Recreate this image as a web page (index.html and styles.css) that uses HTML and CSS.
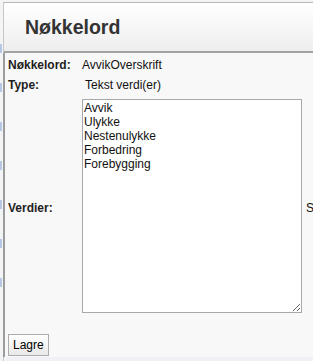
FILE: index.html
```html
<!DOCTYPE HTML>
<html lang="no">
<head>
    <meta charset="UTF-8">
    <meta name="viewport" content="width=device-width, initial-scale=1.0">
    <title>Nøkkelord</title>
    <link rel="stylesheet" href="styles.css">
</head>
<body>
    <div class="page-behind">
        <i></i><i></i><i></i><i></i><i></i><i></i><i></i>
    </div>

    <div class="dialog">
        <div class="dialog-header">
            <h1>Nøkkelord</h1>
        </div>

        <div class="dialog-content">
            <table class="form-table">
                <tr>
                    <th>Nøkkelord:</th>
                    <td>AvvikOverskrift</td>
                </tr>
                <tr>
                    <th>Type:</th>
                    <td><span class="type-value">Tekst verdi(er)</span></td>
                </tr>
                <tr>
                    <th>Verdier:</th>
                    <td><textarea class="values" spellcheck="false">Avvik
Ulykke
Nestenulykke
Forbedring
Forebygging</textarea></td>
                    <td class="hint">Sortert</td>
                </tr>
            </table>

            <button class="save-button">Lagre</button>
        </div>

        <div class="dialog-footer"></div>
    </div>
</body>
</html>
```

FILE: styles.css
```css
/* Page and the content behind the dialog */
html, body {
    margin: 0;
    padding: 0;
    height: 100%;
    overflow: hidden;
}

body {
    font-family: "Liberation Sans", Arial, sans-serif;
    font-size: 12px;
    background-color: #f3f4f6;
    color: #111;
    display: flex;
}

.page-behind {
    width: 3px;
    flex-shrink: 0;
    display: flex;
    flex-direction: column;
    padding-top: 44px;
    gap: 30px;
}

/* faint link fragments of the page behind */
.page-behind i {
    display: block;
    width: 2px;
    height: 9px;
    background-color: #b7c8e4;
}

/* Dialog box */
.dialog {
    width: 380px;
    flex-shrink: 0;
    margin-top: 2px;
    display: flex;
    flex-direction: column;
    border-top: 1px solid #b8b8b8;
    border-left: 1px solid #c8c8c8;
}

.dialog-header {
    height: 48px;
    display: flex;
    align-items: center;
    padding-left: 21px;
    background: linear-gradient(#ffffff, #eeeeee);
    border-bottom: 2px solid #a2a2a2;
}

.dialog-header h1 {
    margin: 0;
    font-size: 19.5px;
    line-height: 24px;
    color: #333;
}

.dialog-content {
    background-color: #f8f8f8;
    border-left: 2px solid #9c9c9c;
    margin-left: -1px;
    padding: 2px 0 0 3px;
    height: 302px;
}

/* Form table */
.form-table {
    border-collapse: collapse;
}

.form-table th {
    width: 74px;
    padding: 3px 0;
    text-align: left;
    font-weight: bold;
    color: #1e1e1e;
    line-height: 14px;
    vertical-align: middle;
}

.form-table td {
    padding: 3px 0;
    line-height: 14px;
    vertical-align: middle;
}

.type-value {
    padding-left: 3px;
}

.values {
    display: block;
    width: 220px;
    height: 214px;
    margin: 1px 0 4px;
    padding: 1px;
    box-sizing: border-box;
    border: 1px solid #a8a8a8;
    font-family: "Liberation Sans", Arial, sans-serif;
    font-size: 12px;
    line-height: 14px;
    color: #111;
    background-color: #fff;
}

.form-table td.hint {
    padding-left: 4px;
    white-space: nowrap;
}

/* Save button */
.save-button {
    margin-top: 14px;
    padding: 3px 4px;
    font-family: "Liberation Sans", Arial, sans-serif;
    font-size: 12px;
    line-height: 14px;
    color: #000;
    background: linear-gradient(#ffffff, #e8e8e8);
    border: 1px solid #acacac;
    border-radius: 0;
}

.dialog-footer {
    flex: 1;
    background-color: #eff1f4;
    margin-left: 3px;
}
```
